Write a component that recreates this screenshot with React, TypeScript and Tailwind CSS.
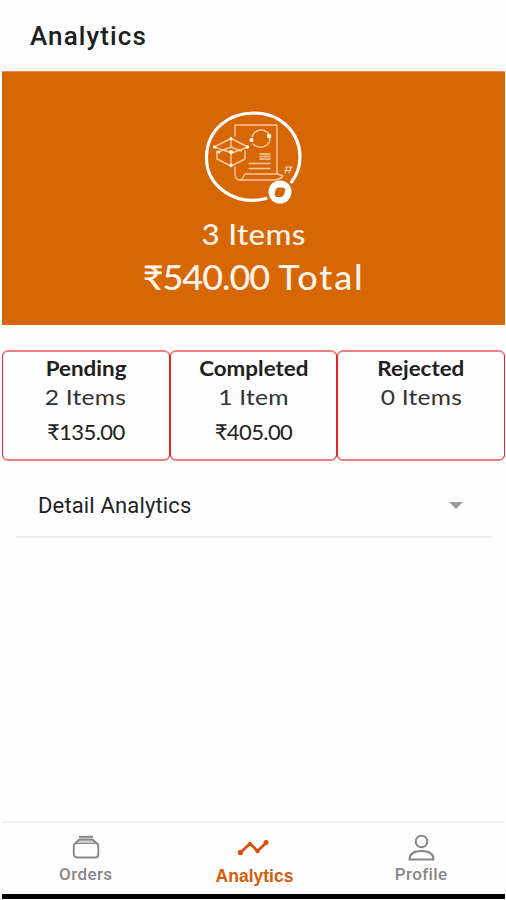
const round = "font-['Lato','Noto_Sans',sans-serif]";

function OrderBadge() {
  return (
    <svg className="block h-[96px] w-[102px] shrink-0" viewBox="203 109 102 96" fill="none" stroke="#fff" strokeLinecap="round" strokeLinejoin="round">
      <path d="M266 198.500C236 206 206 187 206.500 157C207 130 228 113 254 113C280 113 300 132 300 157C300 167 297 175 291.500 182" strokeWidth="3.200" />
      <g stroke="#ffc9a0" strokeWidth="1.400">
        <path d="M235 136V125H277V174M235 167V173C235 180 239 181 242 179L245 174H278L283 176C281 179 277 180 272 180H240" />
        <path d="M249 163.500H270M249 168.500H270M260 154H270M260 156.500H270M260 159H270" />
        <path d="M252 137C254 130 263 127 269 134M270 138C270 147 259 150 253 144" />
        <path d="M231 138.500L248 147L232 153L214 147ZM217 151V159L231 166L245 159V151M231 153V166M231 139V147L221 151M231 147L241 151" />
      </g>
      <g fill="#fff" stroke="none">
        <circle cx="251.500" cy="140" r="2.100" /><circle cx="269" cy="136" r="2.200" />
        <circle cx="231" cy="138.500" r="1.400" /><circle cx="231" cy="152" r="2" />
        <circle cx="247.500" cy="147" r="1.700" /><circle cx="214.500" cy="147" r="1.500" />
        <circle cx="231" cy="165.500" r="1.700" /><circle cx="219" cy="152" r="1.500" />
      </g>
      <path d="M287 167L285 173M291 167L289 173M286 167H292M285 170.500H291" stroke="#ffd8ca" strokeWidth="1.200" />
      <circle cx="280" cy="192" r="11.500" fill="#fff" stroke="none" />
      <path d="M277.500 187.500H283.500L285.500 189.500L284 195L281.500 197H276.500L274.500 195L275.500 190Z" fill="#d76605" stroke="none" />
    </svg>
  );
}

function OrdersIcon() {
  return (
    <svg className="block h-[28px] w-[30px]" viewBox="0 0 30 28" fill="none" stroke="#888" strokeWidth="1.900" strokeLinejoin="round">
      <rect x="2.800" y="9" width="24.500" height="14.500" rx="3" />
      <path d="M4.500 9L8.500 5.500H21.500L25.500 9" fill="#ccc" />
      <path d="M8 2.800H22" strokeWidth="2" />
    </svg>
  );
}

function TrendIcon() {
  return (
    <svg className="block h-[28px] w-[34px]" viewBox="0 0 34 28" fill="none" stroke="#d94f05" strokeWidth="2.700" strokeLinejoin="round">
      <path d="M4.500 18.500L14 9.500L21.500 17L30.500 8.500" />
      <g fill="#d94f05" stroke="none">
        <circle cx="4.500" cy="18.500" r="2.700" /><circle cx="14" cy="10" r="2" />
        <circle cx="21.500" cy="17" r="2.200" /><circle cx="30" cy="8.500" r="2.500" />
      </g>
    </svg>
  );
}

function ProfileIcon() {
  return (
    <svg className="block h-[28px] w-[30px]" viewBox="0 0 30 28" fill="none" stroke="#888" strokeWidth="2" strokeLinejoin="round">
      <circle cx="15.500" cy="7.500" r="5.800" />
      <path d="M3.500 25.500C3.500 19.500 8.500 17 15.500 17S27.500 19.500 27.500 25.500Z" />
    </svg>
  );
}

function StatCard({ title, items, amount }: { title: string; items: string; amount?: string }) {
  return (
    <section className={`flex min-w-0 flex-1 flex-col items-center rounded-[6px] border-x border-y-2 border-x-[#e82424] border-y-[#f08080] pt-[2px] whitespace-nowrap text-[#202020] ${round}`}>
      <h2 className="scale-x-112 text-[20px] leading-[28px] font-bold">{title}</h2>
      <p className="scale-x-112 text-[22px] leading-[29px] tracking-[0.2px] text-[#333]">{items}</p>
      {amount && <p className="mt-[7px] text-[22px] leading-[28px] tracking-[-0.6px]">{amount}</p>}
    </section>
  );
}

export default function App() {
  return (
    <main className="flex h-[900px] w-[506px] flex-col overflow-hidden bg-[#fefefe] pr-px pl-[2px] font-['Roboto',sans-serif]">
      <header className="flex h-[71px] shrink-0 items-center pl-[28px]">
        <h1 className="text-[26px] leading-[30px] font-medium tracking-[1.1px] text-[#202020]">Analytics</h1>
      </header>
      <section className={`flex h-[254px] shrink-0 flex-col items-center border-t border-[#ef875c] bg-[#d76605] pt-[37px] whitespace-nowrap text-[#fff3ea] ${round}`}>
        <OrderBadge />
        <p className="mt-[11px] scale-x-112 text-[28px] leading-[36px] font-medium tracking-[0.3px]">3 Items</p>
        <p className="mt-[3px] scale-x-106 text-[34px] leading-[44px] font-medium">
          <span className="tracking-[-1px]">₹540.00</span> <span className="tracking-[1.8px]">Total</span>
        </p>
      </section>
      <div className="mt-[25px] flex h-[111px] shrink-0">
        <StatCard title="Pending" items="2 Items" amount="₹135.00" />
        <StatCard title="Completed" items="1 Item" amount="₹405.00" />
        <StatCard title="Rejected" items="0 Items" />
      </div>
      <button className="mr-[13px] ml-[14px] flex h-[77px] shrink-0 items-center justify-between border-b-2 border-[#ededed] pt-[13px] pr-[29px] pl-[22px] text-left">
        <span className="pt-px text-[22px] leading-[28px] tracking-[0.15px] text-[#222]">Detail Analytics</span>
        <svg className="h-[7px] w-[14px]" viewBox="0 0 14 7" fill="#999"><path d="M0 0H14L7 7Z" /></svg>
      </button>
      <nav className="mt-auto grid h-[73px] shrink-0 grid-cols-3 border-t-2 border-[#f1f1f1] text-[#888]">
        <div className="flex flex-col items-center pt-[11px]">
          <OrdersIcon />
          <span className="text-[17px] leading-[24px] font-medium tracking-[0.4px]">Orders</span>
        </div>
        <div className="flex flex-col items-center pt-[11px] text-[#d85b05]">
          <TrendIcon />
          <span className="mt-[2px] ml-[2px] font-['Liberation_Sans',sans-serif] text-[17.5px] leading-[24px] font-bold">Analytics</span>
        </div>
        <div className="flex flex-col items-center pt-[11px]">
          <ProfileIcon />
          <span className="text-[17px] leading-[24px] font-medium tracking-[0.4px]">Profile</span>
        </div>
      </nav>
      <div className="mb-px h-[5px] shrink-0 bg-black" />
    </main>
  );
}
